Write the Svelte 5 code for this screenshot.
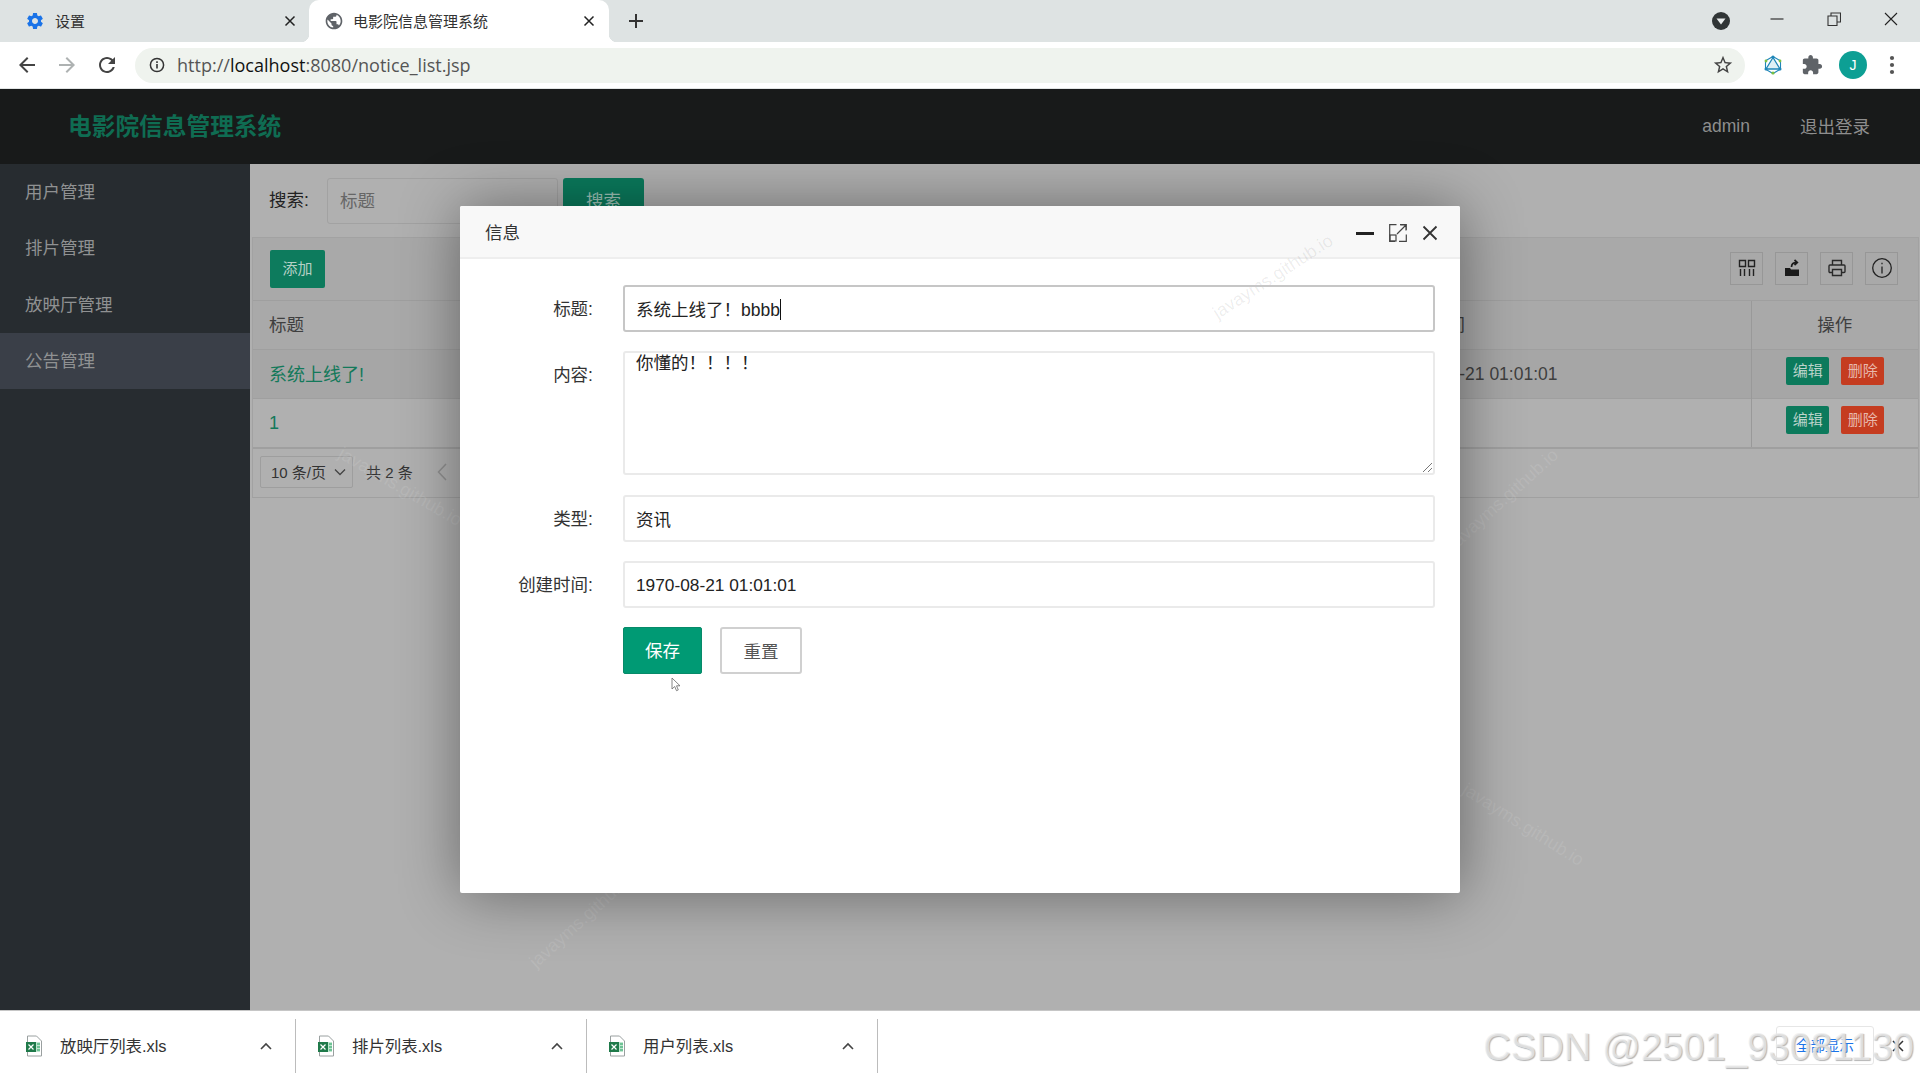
<script>
  const sideItems = ['用户管理', '排片管理', '放映厅管理', '公告管理'];
  const downloads = ['放映厅列表.xls', '排片列表.xls', '用户列表.xls'];
  const marks = [
    { x: 1504, y: 499, r: -42, c: 'light' },
    { x: 584, y: 918, r: -42, c: 'light' },
    { x: 1523, y: 825, r: 32, c: 'light' },
    { x: 400, y: 487, r: 30, c: 'light' },
    { x: 577, y: 138, r: 28, c: 'faint' }
  ];
</script>

{#snippet xlsIcon()}
  <svg class="xls" viewBox="0 0 18 22" width="18" height="22">
    <path d="M2.5 1h9l5 5v15h-14z" fill="#fff" stroke="#9aa0a0" />
    <rect x="6" y="7" width="9" height="10" fill="#bfe6cf" />
    <rect x="1" y="7" width="10" height="10" fill="#1f7a4a" />
    <path d="M3.5 9.5l5 5M8.5 9.5l-5 5" stroke="#fff" stroke-width="1.2" />
    <path d="M12 9h3M12 12h3M12 15h3" stroke="#1f9d5c" stroke-width="1.2" />
  </svg>
{/snippet}

{#snippet closeX(size)}
  <svg viewBox="0 0 12 12" width={size} height={size}>
    <path d="M1.5 1.5l9 9M10.5 1.5l-9 9" stroke="#222" stroke-width="1.5" fill="none" />
  </svg>
{/snippet}

<div class="screen">
  <div class="tabbar">
    <div class="tab">
      <svg class="fav" viewBox="0 0 24 24" width="20" height="20"><path fill="#1a73e8" d="M19.14 12.94c.04-.3.06-.61.06-.94 0-.32-.02-.64-.07-.94l2.03-1.58c.18-.14.23-.41.12-.61l-1.92-3.32c-.12-.22-.37-.29-.59-.22l-2.39.96c-.5-.38-1.03-.7-1.62-.94l-.36-2.54c-.04-.24-.24-.41-.48-.41h-3.84c-.24 0-.43.17-.47.41l-.36 2.54c-.59.24-1.13.57-1.62.94l-2.39-.96c-.22-.08-.47 0-.59.22L2.74 8.87c-.12.21-.08.47.12.61l2.03 1.58c-.05.3-.09.63-.09.94s.02.64.07.94l-2.03 1.58c-.18.14-.23.41-.12.61l1.92 3.32c.12.22.37.29.59.22l2.39-.96c.5.38 1.03.7 1.62.94l.36 2.54c.05.24.24.41.48.41h3.84c.24 0 .44-.17.47-.41l.36-2.54c.59-.24 1.13-.56 1.62-.94l2.39.96c.22.08.47 0 .59-.22l1.92-3.32c.12-.22.07-.47-.12-.61l-2.01-1.58zM12 15.6c-1.98 0-3.6-1.62-3.6-3.6s1.62-3.6 3.6-3.6 3.6 1.62 3.6 3.6-1.62 3.6-3.6 3.6z" /></svg>
      <span class="tabtext">设置</span>
      {@render closeX(12)}
    </div>
    <div class="tab active">
      <svg class="fav" viewBox="0 0 24 24" width="20" height="20"><path fill="#5f6368" d="M12 2C6.48 2 2 6.48 2 12s4.48 10 10 10 10-4.48 10-10S17.52 2 12 2zm-1 17.93c-3.95-.49-7-3.85-7-7.93 0-.62.08-1.21.21-1.79L9 15v1c0 1.1.9 2 2 2v1.93zm6.9-2.54c-.26-.81-1-1.39-1.9-1.39h-1v-3c0-.55-.45-1-1-1H8v-2h2c.55 0 1-.45 1-1V7h2c1.1 0 2-.9 2-2v-.41c2.93 1.19 5 4.06 5 7.41 0 2.08-.8 3.97-2.1 5.39z" /></svg>
      <span class="tabtext">电影院信息管理系统</span>
      {@render closeX(12)}
    </div>
    <svg class="newtab" viewBox="0 0 16 16" width="16" height="16"><path d="M8 1v14M1 8h14" stroke="#333" stroke-width="2" /></svg>
    <div class="spacer"></div>
    <svg class="profile" viewBox="0 0 18 18" width="18" height="18"><circle cx="9" cy="9" r="9" fill="#303536" /><path d="M4.5 6.5h9L9 12.5z" fill="#e8ecec" /></svg>
    <div class="winbtns">
      <svg viewBox="0 0 14 14" width="14" height="14"><path d="M0.5 7h13" stroke="#333" stroke-width="1.2" /></svg>
      <svg viewBox="0 0 14 14" width="14" height="14"><path d="M1 4h9v9.5H1zM4 4V1h9.5v9H10" stroke="#333" stroke-width="1.1" fill="none" /></svg>
      <svg viewBox="0 0 14 14" width="14" height="14"><path d="M1 1l12 12M13 1L1 13" stroke="#222" stroke-width="1.1" /></svg>
    </div>
  </div>

  <div class="toolbar">
    <svg class="nav" viewBox="0 0 24 24" width="24" height="24"><path fill="#444" d="M20 11H7.83l5.59-5.59L12 4l-8 8 8 8 1.41-1.41L7.83 13H20v-2z" /></svg>
    <svg class="nav" viewBox="0 0 24 24" width="24" height="24"><path fill="#aeb2b2" d="M4 11h12.17l-5.59-5.59L12 4l8 8-8 8-1.41-1.41L16.17 13H4v-2z" /></svg>
    <svg class="nav" viewBox="0 0 24 24" width="24" height="24"><path fill="#444" d="M17.65 6.35C16.2 4.9 14.21 4 12 4c-4.42 0-7.99 3.58-7.99 8s3.57 8 7.99 8c3.73 0 6.84-2.55 7.73-6h-2.08c-.82 2.33-3.04 4-5.65 4-3.31 0-6-2.69-6-6s2.69-6 6-6c1.66 0 3.14.69 4.22 1.78L13 11h7V4l-2.35 2.35z" /></svg>
    <div class="omni">
      <svg viewBox="0 0 16 16" width="16" height="16"><circle cx="8" cy="8" r="6.6" fill="none" stroke="#333" stroke-width="1.5" /><path d="M8 7v4.5M8 4.3v1.6" stroke="#333" stroke-width="1.6" /></svg>
      <span class="url"><span class="dim">http://</span>localhost<span class="dim">:8080/notice_list.jsp</span></span>
      <div class="spacer"></div>
      <svg viewBox="0 0 24 24" width="22" height="22"><path fill="#444" d="M22 9.24l-7.19-.62L12 2 9.19 8.63 2 9.24l5.46 4.73L5.82 21 12 17.27 18.18 21l-1.63-7.03L22 9.24zM12 15.4l-3.76 2.27 1-4.28-3.32-2.88 4.38-.38L12 6.1l1.71 4.04 4.38.38-3.32 2.88 1 4.28L12 15.4z" /></svg>
    </div>
    <div class="exts">
      <svg viewBox="0 0 20 20" width="20" height="20">
        <path d="M10 1.500l7.500 4.300v8.400L10 18.500l-7.500-4.300V5.800z" fill="none" stroke="#1f86b8" stroke-width="1.100" />
        <path d="M10 2.500L3 14h14z" fill="#dff0f5" stroke="#1f86b8" stroke-width="1.300" />
        <circle cx="10" cy="2" r="1.500" fill="#1f86b8" /><circle cx="3" cy="14" r="1.500" fill="#1f86b8" /><circle cx="17" cy="14" r="1.500" fill="#1f86b8" />
        <circle cx="3" cy="6" r="1.400" fill="#7cc142" /><circle cx="17" cy="6" r="1.400" fill="#7cc142" /><circle cx="10" cy="18" r="1.600" fill="#7cc142" />
      </svg>
      <svg viewBox="0 0 24 24" width="22" height="22"><path fill="#5f6368" d="M20.5 11H19V7c0-1.1-.9-2-2-2h-4V3.5C13 2.12 11.88 1 10.5 1S8 2.12 8 3.5V5H4c-1.1 0-1.99.9-1.99 2v3.8H3.5c1.49 0 2.7 1.21 2.7 2.7s-1.21 2.7-2.7 2.7H2V20c0 1.1.9 2 2 2h3.8v-1.5c0-1.49 1.21-2.7 2.7-2.7 1.49 0 2.7 1.21 2.7 2.7V22H17c1.1 0 2-.9 2-2v-4h1.5c1.38 0 2.5-1.12 2.5-2.5S21.88 11 20.5 11z" /></svg>
      <div class="avatar">J</div>
      <svg viewBox="0 0 6 20" width="6" height="20"><circle cx="3" cy="3" r="2.100" fill="#555" /><circle cx="3" cy="10" r="2.100" fill="#555" /><circle cx="3" cy="17" r="2.100" fill="#555" /></svg>
    </div>
  </div>

  <div class="page">
    <header class="head">
      <div class="brand">电影院信息管理系统</div>
      <div class="spacer"></div>
      <span class="user">admin</span>
      <span class="logout">退出登录</span>
    </header>
    <div class="body">
      <nav class="side">
        {#each sideItems as item, i}
          <div class="sideitem" class:on={i === 3}>{item}</div>
        {/each}
      </nav>
      <main class="main">
        <div class="search">
          <span class="searchlabel">搜索:</span>
          <div class="searchinput">标题</div>
          <div class="searchbtn">搜索</div>
        </div>
        <section class="box">
          <div class="boxbar">
            <div class="addbtn">添加</div>
            <div class="spacer"></div>
            <div class="tool"><svg viewBox="0 0 18 18" width="18" height="18"><path d="M1.5 1.500h6v6h-6zM10.500 1.500h6v6h-6zM2.500 10v7M6.500 10v7M11.500 10v7M15.500 10v7" fill="none" stroke="#222" stroke-width="1.400" /></svg></div>
            <div class="tool"><svg viewBox="0 0 20 20" width="20" height="20"><path d="M3 10h5l1 1.500h8V18H3z" fill="#1a1a1a" /><path d="M9.500 9c0-3 2-4.500 5-4.500M12.500 2L15.300 4.500 12.500 7" fill="none" stroke="#1a1a1a" stroke-width="1.700" /></svg></div>
            <div class="tool"><svg viewBox="0 0 20 20" width="20" height="20"><path d="M5.500 7V2.500h9V7M5.500 14.500H3a1 1 0 0 1-1-1V8a1 1 0 0 1 1-1h14a1 1 0 0 1 1 1v5.500a1 1 0 0 1-1 1h-2.500M5.500 11.500h9v6h-9z" fill="none" stroke="#2a2a2a" stroke-width="1.400" /></svg></div>
            <div class="tool"><svg viewBox="0 0 22 22" width="22" height="22"><circle cx="11" cy="11" r="9.300" fill="none" stroke="#222" stroke-width="1.300" /><path d="M11 9.500v7M11 5.800v1.500" stroke="#222" stroke-width="1.300" /></svg></div>
          </div>
          <table class="grid">
            <colgroup><col class="c1" /><col class="c2" /><col class="c3" /></colgroup>
            <thead>
              <tr><th>标题</th><th class="timehead">创建时间</th><th class="ops">操作</th></tr>
            </thead>
            <tbody>
              <tr class="hover">
                <td class="link">系统上线了!</td>
                <td class="date">1970-08-21 01:01:01</td>
                <td class="opcell"><span class="mini edit">编辑</span><span class="mini del">删除</span></td>
              </tr>
              <tr>
                <td class="link second">1</td>
                <td></td>
                <td class="opcell"><span class="mini edit">编辑</span><span class="mini del">删除</span></td>
              </tr>
            </tbody>
          </table>
          <div class="pager">
            <div class="select"><span>10 条/页</span>
              <svg viewBox="0 0 12 8" width="12" height="8"><path d="M1 1.500l5 5 5-5" fill="none" stroke="#444" stroke-width="1.300" /></svg>
            </div>
            <span class="total">共 2 条</span>
            <svg class="prev" viewBox="0 0 10 18" width="10" height="18"><path d="M9 1L1.500 9 9 17" fill="none" stroke="#8f8f8f" stroke-width="1.500" /></svg>
          </div>
        </section>
      </main>
    </div>

    {#each marks as m}
      <span class="mark {m.c}" style="left:{m.x}px;top:{m.y - 89}px;transform:translate(-50%,-50%) rotate({m.r}deg)">javayms.github.io</span>
    {/each}

    <div class="modal">
      <div class="modalhead">
        <span class="modaltitle">信息</span>
        <div class="spacer"></div>
        <svg class="mi" viewBox="0 0 18 18" width="18" height="18"><rect x="0" y="8" width="18" height="3" fill="#222" /></svg>
        <svg class="mi" viewBox="0 0 18 18" width="18" height="18"><path d="M7.500 0.700H0.700V17.300H6M10 17.300h7.300V10.500M17.300 6V0.700H11M8 10L16.500 1.500M11.500 1h5.500v5.500" fill="none" stroke="#444" stroke-width="1.200" /><rect x="1" y="11" width="6" height="6" fill="none" stroke="#444" stroke-width="1.200" /></svg>
        <svg class="mi" viewBox="0 0 16 16" width="16" height="16"><path d="M1.500 1.500l13 13M14.500 1.500l-13 13" stroke="#333" stroke-width="1.800" /></svg>
      </div>
      <span class="mark dark modalmark">javayms.github.io</span>
      <form class="form">
        <div class="row"><span class="lab">标题:</span><div class="field focus">系统上线了！bbbb<i class="caret"></i></div></div>
        <div class="row"><span class="lab">内容:</span><div class="field area">你懂的！！！！
          <svg class="grip" viewBox="0 0 10 10" width="10" height="10"><path d="M1 10L10 1M6 10l4-4" stroke="#777" stroke-width="1" /></svg></div></div>
        <div class="row"><span class="lab">类型:</span><div class="field">资讯</div></div>
        <div class="row"><span class="lab">创建时间:</span><div class="field num">1970-08-21 01:01:01</div></div>
        <div class="row btns">
          <span class="lab"></span>
          <div class="save">保存
            <svg class="cursor" viewBox="0 0 10 16" width="10" height="16"><path d="M1 1v11l2.700-2.500 1.800 4.200 1.800-.8-1.800-4.100H9z" fill="#fff" stroke="#666" stroke-width="0.800" /></svg>
          </div>
          <div class="reset">重置</div>
        </div>
      </form>
    </div>
  </div>

  <footer class="dl">
    {#each downloads as d}
      <div class="dlitem">
        {@render xlsIcon()}
        <span class="dlname">{d}</span>
        <div class="spacer"></div>
        <svg viewBox="0 0 12 8" width="12" height="8"><path d="M1 7l5-5 5 5" fill="none" stroke="#444" stroke-width="1.600" /></svg>
      </div>
    {/each}
    <div class="spacer"></div>
    <div class="showall">全部显示</div>
    <svg class="dlclose" viewBox="0 0 12 12" width="12" height="12"><path d="M1 1l10 10M11 1L1 11" stroke="#333" stroke-width="1.500" /></svg>
    <span class="csdn">CSDN @2501_93081130</span>
  </footer>
</div>

<style>
  :global(body) { margin: 0; background: #fff; }
  .screen {
    width: 1920px; height: 1080px; overflow: hidden; position: relative;
    display: flex; flex-direction: column;
    font-family: "Liberation Sans", "Noto Sans CJK SC", sans-serif;
    font-size: 17.5px; color: #333;
  }
  .spacer { flex: 1; }
  svg { display: block; flex: none; }

  .tabbar { height: 42px; flex: none; background: #dee3e3; display: flex; align-items: center; }
  .tab { width: 300px; height: 42px; display: flex; align-items: center; box-sizing: border-box; padding: 0 15px 0 15px; position: relative; font-size: 15px; }
  .tab:first-child { width: 309px; padding-left: 25px; padding-right: 13px; }
  .tabtext { flex: 1; margin-left: 10px; color: #333; position: relative; top: -1px; }
  .tab.active { background: #fff; border-radius: 10px 10px 0 0; padding-right: 14px; }
  .tab.active .tabtext { margin-left: 9px; }
  .tab.active::before, .tab.active::after { content: ""; position: absolute; bottom: 0; width: 8px; height: 8px; }
  .tab.active::before { left: -8px; background: radial-gradient(circle at 0 0, transparent 8px, #fff 8.500px); }
  .tab.active::after { right: -8px; background: radial-gradient(circle at 100% 0, transparent 8px, #fff 8.500px); }
  .newtab { margin-left: 19px; }
  .profile { margin-right: 40px; }
  .winbtns { display: flex; gap: 43px; margin-right: 22px; margin-bottom: 5px; }

  .toolbar { height: 47px; flex: none; background: #fff; border-bottom: 1px solid #e2e5e5; box-sizing: border-box; display: flex; align-items: center; padding-left: 15px; }
  .nav { margin-right: 16px; }
  .omni { width: 1610px; height: 35px; margin-right: -1px; background: #eff3ee; border-radius: 18px; display: flex; align-items: center; padding: 0 11px 0 14px; box-sizing: border-box; }
  .url { margin-left: 12px; font-family: "Open Sans", sans-serif; font-size: 18.050px; color: #111; }
  .dim { color: #555; }
  .exts { display: flex; align-items: center; margin-left: 19px; }
  .exts > :nth-child(2) { margin-left: 18px; }
  .avatar { width: 28px; height: 28px; border-radius: 50%; background: #0d9f94; color: #fff; font-size: 14px; display: flex; align-items: center; justify-content: center; margin-left: 16px; }
  .exts > :nth-child(4) { margin-left: 22px; }

  .page { flex: 1; min-height: 0; position: relative; background: #b0b0b0; display: flex; flex-direction: column; overflow: hidden; }
  .head { height: 75px; flex: none; background: #181a1a; display: flex; align-items: center; padding-left: 68px; padding-right: 50px; }
  .brand { font-size: 23.700px; font-weight: bold; color: #0f6c52; position: relative; top: -2px; }
  .user { color: #8e8e8e; font-size: 17.500px; }
  .logout { color: #8e8e8e; margin-left: 50px; position: relative; top: -1px; }
  .body { flex: 1; display: flex; min-height: 0; }
  .side { width: 250px; flex: none; background: #272c30; }
  .sideitem { height: 56.300px; line-height: 56px; padding-left: 25px; color: #8f9192; }
  .sideitem.on { background: #3a3f48; }
  .main { flex: 1; min-width: 0; }

  .search { height: 73px; box-sizing: border-box; display: flex; align-items: center; padding-left: 19px; }
  .searchlabel { color: #222; width: 58px; position: relative; top: -2px; }
  .searchinput { width: 231px; height: 46px; box-sizing: border-box; border: 1px solid #a2a2a2; border-radius: 3px; line-height: 44px; padding-left: 12px; color: #666; }
  .searchbtn { width: 81px; height: 46px; margin-left: 5px; background: #0a7a5c; border-radius: 3px; color: #9fc4b8; text-align: center; line-height: 47px; }

  .box { margin-left: 2px; margin-right: 1px; border: 1px solid #a2a2a2; border-bottom: 1px solid #a0a0a0; }
  .boxbar { height: 62px; background: #a9a9a9; display: flex; align-items: center; padding: 0 20px 0 17px; gap: 12px; box-sizing: border-box; }
  .addbtn { width: 55px; height: 38px; background: #0d7b5d; border-radius: 2px; color: #b5d0c6; text-align: center; line-height: 38px; font-size: 15px; }
  .tool { width: 33px; height: 33px; box-sizing: border-box; border: 1px solid #979797; display: flex; align-items: center; justify-content: center; margin-bottom: 2px; }

  .grid { width: 100%; table-layout: fixed; border-collapse: collapse; color: #3f3f3f; }
  .c1 { width: 1122px; } .c2 { width: 376px; } .c3 { width: auto; }
  .grid tr { height: 49px; }
  .grid tbody tr:last-child { height: 48px; }
  .grid th, .grid td { font-weight: normal; text-align: left; padding: 0 0 0 17px; border-top: 1px solid #9f9f9f; }
  .grid th { background: #a9a9a9; padding-bottom: 4px; }
  .grid td { padding-left: 12px; font-size: 17.300px; }
  .grid td:first-child, .grid th:first-child { padding-left: 16px; }
  .date { padding-left: 20px !important; font-size: 17.500px !important; }
  .timehead { padding-left: 20px !important; }
  .grid th.ops { text-align: center; padding: 0 0 4px 0; border-left: 1px solid #999; }
  .hover td { background: #a6a6a6; }
  .hover .link { padding-bottom: 2px; }
  .second { padding-top: 2px !important; }
  .link { color: #13795a; font-size: 18px !important; }
  .opcell { border-left: 1px solid #999; text-align: center !important; padding: 0 0 0 1px !important; font-size: 0 !important; }
  .mini { display: inline-block; width: 43px; height: 28px; line-height: 27px; border-radius: 2px; text-align: center; font-size: 15px; color: #bcd3cb; vertical-align: middle; position: relative; top: -3px; }
  .edit { background: #0c7a5c; }
  .del { background: #c53c20; color: #e8b9ad; margin-left: 12px; }

  .pager { height: 50px; border-top: 2px solid #9f9f9f; box-sizing: border-box; display: flex; align-items: center; padding-left: 7px; padding-bottom: 2px; background: #b0b0b0; }
  .select { width: 93px; height: 32px; box-sizing: border-box; border: 1px solid #9e9e9e; border-radius: 2px; font-size: 15px; padding-left: 10px; display: flex; align-items: center; justify-content: space-between; padding-right: 6px; color: #333; white-space: nowrap; }
  .total { margin-left: 13px; font-size: 15px; color: #333; white-space: nowrap; }
  .prev { margin-left: 24px; }

  .modal { position: absolute; left: 460px; top: 117px; width: 1000px; height: 687px; background: #fff; box-shadow: 1px 1px 61px rgba(0, 0, 0, 0.42); border-radius: 2px; overflow: hidden; }
  .modalhead { height: 53px; box-sizing: border-box; background: #f8f8f8; border-bottom: 2px solid #eee; display: flex; align-items: center; padding: 0 22px 0 25px; }
  .modaltitle { color: #333; }
  .mi { margin: 2px 0 0 15px; }
  .form { padding: 26px 25px 0 0; display: flex; flex-direction: column; gap: 19.400px; }
  .row { display: flex; min-height: 47px; }
  .lab { width: 133px; flex: none; box-sizing: border-box; text-align: right; line-height: 47px; color: #333; margin-right: 30px; position: relative; top: 1px; }
  .field { flex: 1; height: 47px; box-sizing: border-box; border: 2px solid #eaeaea; border-radius: 3px; line-height: 46px; padding-left: 11px; color: #222; font-size: 17.500px; white-space: pre; position: relative; }
  .focus { border-color: #c6c6c6; }
  .caret { display: inline-block; width: 1px; height: 21px; background: #111; vertical-align: -4px; }
  .area { height: 124px; line-height: 20px; }
  .grip { position: absolute; right: 1px; bottom: 1px; }
  .num { font-size: 17.300px; line-height: 44px; }
  .btns { margin-top: -1px; }
  .save { width: 79px; height: 47px; background: #009a74; color: #fff; border-radius: 2px; text-align: center; line-height: 46px; position: relative; border: 1px solid #078a69; box-sizing: border-box; }
  .cursor { position: absolute; left: 47px; top: 49px; }
  .reset { width: 82px; height: 47px; margin-left: 18px; box-sizing: border-box; border: 2px solid #d0d0d0; border-radius: 3px; color: #555; text-align: center; line-height: 47px; }

  .mark { position: absolute; white-space: nowrap; font-size: 18px; pointer-events: none; }
  .mark.light { color: rgba(255, 255, 255, 0.11); }
  .mark.dark { color: rgba(0, 0, 0, 0.08); }
  .mark.faint { color: rgba(255, 255, 255, 0.02); }
  .modalmark { left: 813px; top: 71px; transform: translate(-50%, -50%) rotate(-33deg); }

  .dl { height: 70px; flex: none; background: #fff; border-top: 1px solid #c6c6c6; box-sizing: border-box; display: flex; align-items: center; position: relative; }
  .dlitem { width: 291px; height: 54px; box-sizing: border-box; border-right: 1px solid #bcbcbc; display: flex; align-items: center; padding: 0 23px 0 21px; }
  .dlitem:first-child { width: 296px; padding-left: 25px; }
  .dlname { margin-left: 17px; font-size: 16.400px; color: #333; position: relative; top: -1px; }
  .showall { width: 98px; height: 39px; box-sizing: border-box; border: 1px solid #e6e6e6; border-radius: 3px; color: #1a73e8; font-size: 14.500px; text-align: center; line-height: 38px; }
  .dlclose { margin: 0 16px 0 18px; }
  .csdn { position: absolute; right: 6px; top: 52%; transform: translateY(-50%); font-size: 38.200px; color: rgba(238, 238, 238, 0.72); text-shadow: 1px 1px 1px #b4b4b4; white-space: nowrap; }
</style>
